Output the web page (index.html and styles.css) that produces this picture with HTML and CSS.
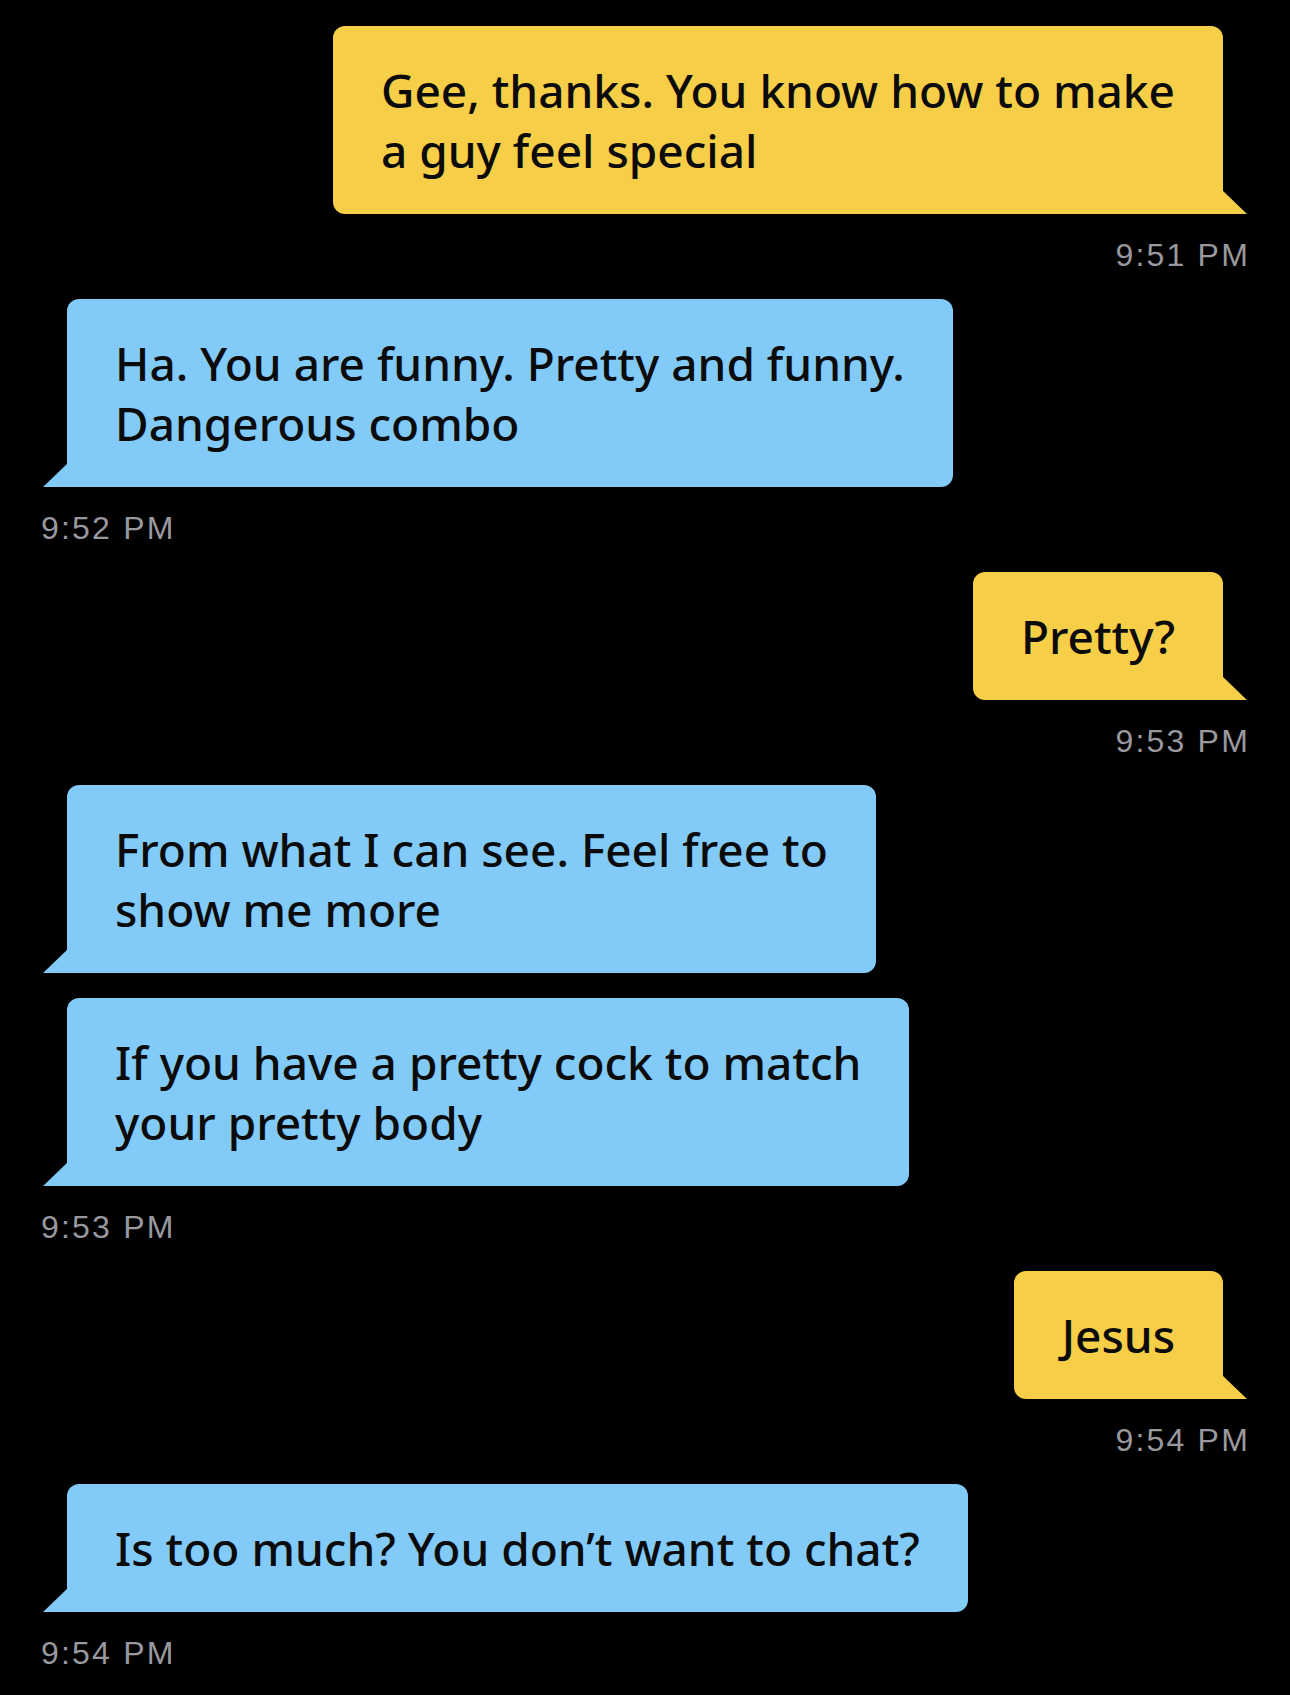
FILE: index.html
```html
<!DOCTYPE html>
<html lang="en">
<head>
<meta charset="utf-8">
<title>Chat</title>
<link rel="stylesheet" href="styles.css">
</head>
<body>
<main class="chat">
  <section class="group out">
    <div class="bubble">Gee, thanks. You know how to make<br>a guy feel special</div>
    <div class="time">9:51 PM</div>
  </section>
  <section class="group in">
    <div class="bubble">Ha. You are funny. Pretty and funny.<br>Dangerous combo</div>
    <div class="time">9:52 PM</div>
  </section>
  <section class="group out">
    <div class="bubble">Pretty?</div>
    <div class="time">9:53 PM</div>
  </section>
  <section class="group in">
    <div class="bubble">From what I can see. Feel free to<br>show me more</div>
    <div class="bubble">If you have a pretty cock to match<br>your pretty body</div>
    <div class="time">9:53 PM</div>
  </section>
  <section class="group out">
    <div class="bubble">Jesus</div>
    <div class="time">9:54 PM</div>
  </section>
  <section class="group in">
    <div class="bubble">Is too much? You don’t want to chat?</div>
    <div class="time">9:54 PM</div>
  </section>
</main>
</body>
</html>
```
FILE: styles.css
```css
html, body {
  margin: 0;
  padding: 0;
  background: #000;
}
body {
  min-height: 1695px;
}
.chat {
  display: flex;
  flex-direction: column;
  gap: 24px;
  padding: 26px 42px 20px 41px;
}
.group {
  display: flex;
  flex-direction: column;
  gap: 25px;
}
.group.out {
  align-items: flex-end;
}
.group.in {
  align-items: flex-start;
}
.bubble {
  position: relative;
  font-family: "Noto Sans", "Open Sans", sans-serif;
  font-weight: 500;
  font-size: 46px;
  line-height: 60px;
  color: #0b0b0b;
  white-space: nowrap;
  padding: 34px 48px;
  border-radius: 12px;
}
.out .bubble {
  background: #f6ce48;
  margin-right: 25px;
  border-bottom-right-radius: 0;
}
.in .bubble {
  background: #82caf7;
  margin-left: 26px;
  border-bottom-left-radius: 0;
}
.bubble::after {
  content: "";
  position: absolute;
  bottom: 0;
  width: 25px;
  height: 24px;
  background: inherit;
}
.out .bubble::after {
  right: -24px;
  clip-path: polygon(0 0, 0 100%, 100% 100%);
}
.in .bubble::after {
  left: -24px;
  clip-path: polygon(100% 0, 100% 100%, 0 100%);
}
.time {
  font-family: "Liberation Sans", Arial, sans-serif;
  font-size: 32px;
  line-height: 40px;
  letter-spacing: 2.2px;
  color: #98989e;
  margin-top: -4px;
}
.out .time {
  margin-right: -2px;
}
```
